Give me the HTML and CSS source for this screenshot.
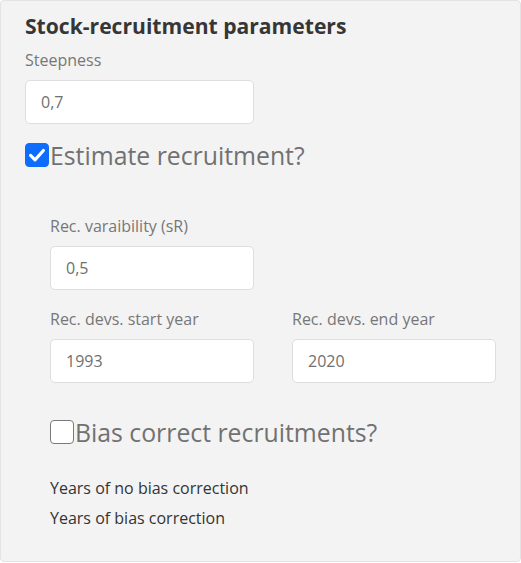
FILE: index.html
```html
<!DOCTYPE html>
<html>
<head>
<meta charset="utf-8">
<link rel="stylesheet" href="styles.css">
</head>
<body>
<div class="well">
  <h4 class="title">Stock-recruitment parameters</h4>
  <div class="group">
    <label class="lbl">Steepness</label>
    <div class="input w229">0,7</div>
  </div>
  <div class="check">
    <span class="box on">
      <svg viewBox="0 0 24 24" width="24" height="24"><path d="M5 12.5 L9.8 17.3 L19 7" fill="none" stroke="#fff" stroke-width="3.4" stroke-linecap="round" stroke-linejoin="round"/></svg>
    </span>
    <span class="clabel">Estimate recruitment?</span>
  </div>
  <div class="nested">
    <div class="group">
      <label class="lbl">Rec. varaibility (sR)</label>
      <div class="input w204">0,5</div>
    </div>
    <div class="row">
      <div class="group col">
        <label class="lbl lbl-row">Rec. devs. start year</label>
        <div class="input">1993</div>
      </div>
      <div class="group col">
        <label class="lbl lbl-row">Rec. devs. end year</label>
        <div class="input">2020</div>
      </div>
    </div>
    <div class="check check2">
      <span class="box"></span>
      <span class="clabel">Bias correct recruitments?</span>
    </div>
    <div class="txt first">Years of no bias correction</div>
    <div class="txt">Years of bias correction</div>
  </div>
</div>
</body>
</html>
```
FILE: styles.css
```css
html, body {
  margin: 0;
  padding: 0;
  background: #ffffff;
}
body {
  font-family: "Open Sans", "Liberation Sans", sans-serif;
  color: #333333;
}
.well {
  box-sizing: border-box;
  width: 521px;
  height: 562px;
  background: #f3f3f3;
  border: 1px solid #e3e3e3;
  border-radius: 4px;
  padding: 12px 24px 0 24px;
}
.title {
  margin: 0;
  font-size: 21.1px;
  line-height: 25px;
  font-weight: 700;
  color: #363636;
}
.group {
  display: flex;
  flex-direction: column;
  align-items: flex-start;
}
.lbl {
  font-size: 16px;
  line-height: 24px;
  color: #777777;
  margin-top: 10px;
  margin-bottom: 8px;
}
.lbl-row {
  margin-top: 17px;
}
.input {
  box-sizing: border-box;
  height: 44px;
  background: #ffffff;
  border: 1px solid #dedede;
  border-radius: 5px;
  padding: 0 15px;
  font-size: 16px;
  color: #707070;
  display: flex;
  align-items: center;
}
.w229 { width: 229px; }
.w204 { width: 204px; }
.check {
  display: flex;
  align-items: center;
  margin-top: 19px;
  height: 24px;
}
.box {
  box-sizing: border-box;
  width: 24px;
  height: 24px;
  border-radius: 4px;
  border: 1px solid #7a7a7a;
  background: #ffffff;
  display: flex;
  align-items: center;
  justify-content: center;
  flex: none;
}
.box.on {
  background: #0d6efd;
  border-color: #0d6efd;
}
.clabel {
  font-size: 24.8px;
  line-height: 24px;
  color: #717171;
  margin-left: 1px;
}
.nested {
  padding: 37px 0 0 25px;
  width: 446px;
}
.row {
  display: flex;
  gap: 38px;
}
.col {
  flex: 1;
}
.col .input {
  width: 100%;
}
.check2 {
  margin-top: 37px;
}
.txt {
  font-size: 16px;
  line-height: 24px;
  color: #333333;
  margin-top: 6px;
}
.txt.first {
  margin-top: 32px;
}
```
